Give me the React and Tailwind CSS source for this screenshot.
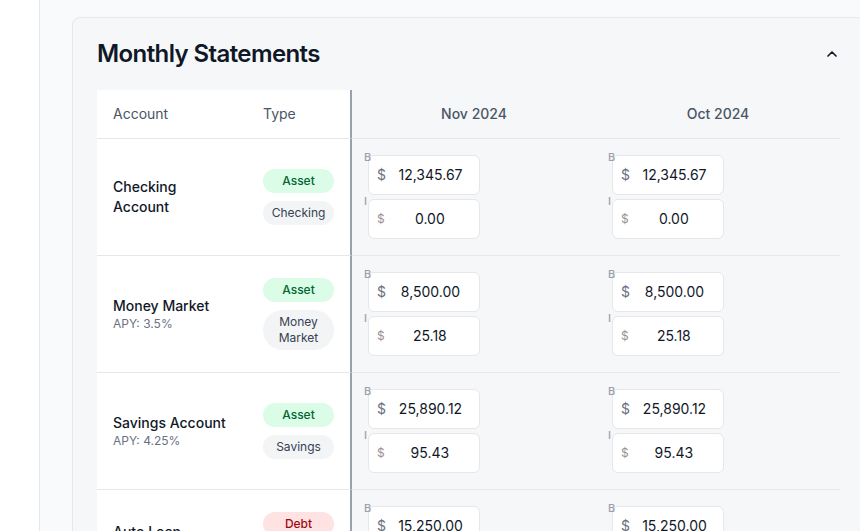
import React from "react";
import { ChevronUp } from "lucide-react";

const accounts = [
  {
    name: "Checking Account",
    sub: [],
    kind: "Asset",
    type: "Checking",
    months: [
      { b: "12,345.67", i: "0.00" },
      { b: "12,345.67", i: "0.00" },
    ],
  },
  {
    name: "Money Market",
    sub: ["APY: 3.5%"],
    kind: "Asset",
    type: "Money Market",
    months: [
      { b: "8,500.00", i: "25.18" },
      { b: "8,500.00", i: "25.18" },
    ],
  },
  {
    name: "Savings Account",
    sub: ["APY: 4.25%"],
    kind: "Asset",
    type: "Savings",
    months: [
      { b: "25,890.12", i: "95.43" },
      { b: "25,890.12", i: "95.43" },
    ],
  },
  {
    name: "Auto Loan",
    sub: ["APR: 5.9%", "Min: $425.00"],
    kind: "Debt",
    type: "Auto Loan",
    months: [
      { b: "15,250.00", i: "62.27" },
      { b: "15,250.00", i: "62.27" },
    ],
  },
];

const MoneyInput = ({ label, value, small }) => (
  <div className="relative">
    <span className="absolute -left-1 -top-[3px] text-[11px] leading-none font-medium text-gray-400">
      {label}
    </span>
    <div className="flex items-center h-10 w-28 px-2 bg-white border border-gray-200 rounded-md">
      <span className={small ? "text-xs text-[#9d8f92]" : "text-sm text-gray-500"}>$</span>
      <input
        readOnly
        value={value}
        className="ml-1 w-full min-w-0 bg-transparent text-center text-sm text-gray-900 outline-none"
      />
    </div>
  </div>
);

const Badge = ({ children, tone }) => {
  const tones = {
    Asset: "bg-green-100 text-green-800 font-medium",
    Debt: "bg-red-100 text-red-800 font-medium",
    plain: "bg-gray-100 text-gray-700",
  };
  return (
    <span className={`block rounded-full px-2 py-1 text-center text-xs leading-4 ${tones[tone]}`}>
      {children}
    </span>
  );
};

export default function App() {
  return (
    <div className="flex h-[531px] w-[860px] overflow-hidden font-['Inter',sans-serif]">
      <div className="w-10 shrink-0 bg-white border-r border-gray-200" />
      <main className="flex-1 overflow-hidden bg-gray-50 pt-[17px] pl-8">
        <section className="w-[793px] rounded-lg border border-gray-200 bg-[#f6f7f8] px-6 pt-5">
          <div className="flex items-center justify-between">
            <h2 className="text-2xl font-semibold tracking-tight text-gray-900">Monthly Statements</h2>
            <button className="text-gray-900">
              <ChevronUp size={16} strokeWidth={2.5} />
            </button>
          </div>

          <div className="mt-5 grid grid-cols-[150px_105px_244px_244px]">
            <div className="flex h-[49px] items-center border-b border-gray-200 bg-white px-4 text-sm text-gray-600">
              Account
            </div>
            <div className="flex h-[49px] items-center border-b border-r-2 border-b-gray-200 border-r-gray-400 bg-white px-4 text-sm text-gray-600">
              Type
            </div>
            <div className="flex h-[49px] items-center justify-center border-b border-gray-200 text-sm font-medium text-gray-600">
              Nov 2024
            </div>
            <div className="flex h-[49px] items-center justify-center border-b border-gray-200 text-sm font-medium text-gray-600">
              Oct 2024
            </div>

            {accounts.map((acc) => (
              <React.Fragment key={acc.name}>
                <div className="flex flex-col justify-center border-b border-gray-200 bg-white px-4 py-4">
                  <span className="text-sm font-medium text-gray-900">{acc.name}</span>
                  {acc.sub.map((s) => (
                    <span key={s} className="text-xs text-gray-500">{s}</span>
                  ))}
                </div>
                <div className="flex flex-col justify-center gap-2 border-b border-r-2 border-b-gray-200 border-r-gray-400 bg-white px-4 py-4">
                  <Badge tone={acc.kind}>{acc.kind}</Badge>
                  <Badge tone="plain">{acc.type}</Badge>
                </div>
                {acc.months.map((m, idx) => (
                  <div key={idx} className="flex flex-col gap-1 border-b border-gray-200 px-4 py-4">
                    <MoneyInput label="B" value={m.b} />
                    <MoneyInput label="I" value={m.i} small />
                  </div>
                ))}
              </React.Fragment>
            ))}
          </div>
        </section>
      </main>
    </div>
  );
}
